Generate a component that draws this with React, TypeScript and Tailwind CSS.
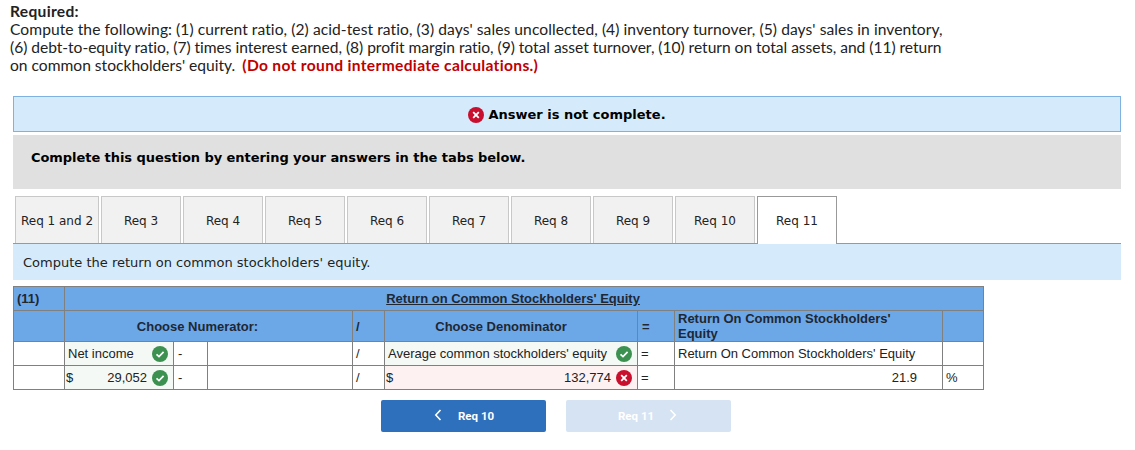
const tabs = ['Req 3', 'Req 4', 'Req 5', 'Req 6', 'Req 7', 'Req 8', 'Req 9', 'Req 10'];

function CheckIcon() {
  return (
    <svg viewBox="0 0 16 16" className="w-4 h-4 shrink-0">
      <circle cx="8" cy="8" r="8" fill="#3d9150" />
      <path d="M4.5 8.3 7 10.6 11.6 5.8" fill="none" stroke="#fff" strokeWidth="1.7" />
    </svg>
  );
}

function CrossIcon() {
  return (
    <svg viewBox="0 0 16 16" className="w-4 h-4 shrink-0">
      <circle cx="8" cy="8" r="8" fill="#c8102e" />
      <path d="M5.2 5.2 10.8 10.8M10.8 5.2 5.2 10.8" fill="none" stroke="#fff" strokeWidth="1.8" />
    </svg>
  );
}

const cell = 'border border-[#808080] p-0 align-middle';
const head = 'border border-[#808080] bg-[#6ca8e7] font-bold text-[#1f2733] align-middle p-0';
const tabClass = 'h-[47px] bg-[#f1f1f1] border border-b-0 border-[#c8c8c8] flex items-center justify-center pt-[2px] text-[12px] text-[#222] whitespace-nowrap';

export default function App() {
  return (
    <div className="w-[1135px] h-[450px] bg-white overflow-hidden relative font-['Liberation_Sans',sans-serif]">
      {/* Question text */}
      <div className="pl-[10px] pt-[2px] h-[96px] text-[15.6px] leading-[18px] text-[#222] font-['Lato',sans-serif] w-[960px] whitespace-nowrap [font-variant-ligatures:none]">
        <div className="font-bold tracking-[0.3px]">Required:</div>
        <div className="tracking-[0.07px]">Compute the following: (1) current ratio, (2) acid-test ratio, (3) days' sales uncollected, (4) inventory turnover, (5) days' sales in inventory,</div>
        <div className="tracking-[-0.03px]">(6) debt-to-equity ratio, (7) times interest earned, (8) profit margin ratio, (9) total asset turnover, (10) return on total assets, and (11) return</div>
        <div>
          on common stockholders' equity.{' '}
          <span className="ml-[3px] font-bold text-[#c00000] tracking-[0.32px]">(Do not round intermediate calculations.)</span>
        </div>
      </div>

      <div className="ml-[13px] w-[1108px] font-['DejaVu_Sans',sans-serif]">
        {/* Status banner */}
        <div className="h-[36px] bg-[#d5ebfb] border border-[#7fb2e0] flex items-center justify-center gap-[4px] pt-[1px] text-[13px] font-bold text-black">
          <CrossIcon />
          <span>Answer is not complete.</span>
        </div>
        <div className="mt-[3px] h-[54px] bg-[#e0e0e0] pl-[18px] pt-[14px] text-[13px] leading-[18px] font-bold text-black tracking-[-0.06px]">
          Complete this question by entering your answers in the tabs below.
        </div>

        {/* Tabs */}
        <div className="mt-[7px] h-[48px] pl-[2px] flex gap-[2px] border-b border-[#999]">
          <div className={`w-[84px] ${tabClass}`}>Req 1 and 2</div>
          {tabs.map((t) => (
            <div key={t} className={`w-[80px] ${tabClass}`}>
              {t}
            </div>
          ))}
          <div className="w-[80px] h-[48px] bg-white border border-b-0 border-[#999] flex items-center justify-center text-[12px] text-[#222] relative z-10">
            Req 11
          </div>
        </div>
        <div className="h-[36px] bg-[#d5ebfb] pl-[10px] pt-[2px] flex items-center text-[13px] text-[#222]">
          Compute the return on common stockholders' equity.
        </div>
      </div>

      {/* Ratio table */}
      <table className="mt-[6px] ml-[13px] border-collapse table-fixed w-[970px] text-[13px] leading-[15px] text-[#222]">
        <colgroup>
          <col className="w-[51px]" />
          <col className="w-[109px]" />
          <col className="w-[34px]" />
          <col className="w-[145px]" />
          <col className="w-[32px]" />
          <col className="w-[253px]" />
          <col className="w-[37px]" />
          <col className="w-[268px]" />
          <col className="w-[41px]" />
        </colgroup>
        <tbody>
          <tr className="h-[24px]">
            <td className={`${head} pl-[3px]`}>(11)</td>
            <td colSpan={8} className={`${head} text-center underline pr-[22px]`}>Return on Common Stockholders' Equity</td>
          </tr>
          <tr className="h-[31px]">
            <td className={head}></td>
            <td colSpan={3} className={`${head} text-center pr-[22px]`}>Choose Numerator:</td>
            <td className={`${head} pl-[3px]`}>/</td>
            <td className={`${head} text-center pr-[20px]`}>Choose Denominator</td>
            <td className={`${head} pl-[4px]`}>=</td>
            <td className={`${head} pl-[3px] pr-[40px]`}>Return On Common Stockholders' Equity</td>
            <td className={head}></td>
          </tr>
          <tr className="h-[24px]">
            <td className={cell}></td>
            <td className={`${cell} bg-[#f4f9f5]`}>
              <div className="flex items-center justify-between pl-[3px] pr-[5px]">
                <span>Net income</span>
                <CheckIcon />
              </div>
            </td>
            <td className={`${cell} pl-[4px]`}>-</td>
            <td className={cell}></td>
            <td className={`${cell} pl-[3px]`}>/</td>
            <td className={`${cell} bg-[#f4f9f5]`}>
              <div className="flex items-center justify-between pl-[3px] pr-[5px]">
                <span className="whitespace-nowrap">Average common stockholders' equity</span>
                <CheckIcon />
              </div>
            </td>
            <td className={`${cell} pl-[3px]`}>=</td>
            <td className={`${cell} pl-[3px] whitespace-nowrap`}>Return On Common Stockholders' Equity</td>
            <td className={cell}></td>
          </tr>
          <tr className="h-[24px]">
            <td className={cell}></td>
            <td className={`${cell} bg-[#f4f9f5]`}>
              <div className="flex items-center pl-[1px] pr-[5px]">
                <span>$</span>
                <span className="ml-auto mr-[5px]">29,052</span>
                <CheckIcon />
              </div>
            </td>
            <td className={`${cell} pl-[4px]`}>-</td>
            <td className={cell}></td>
            <td className={`${cell} pl-[3px]`}>/</td>
            <td className={`${cell} bg-[#fdf1f2]`}>
              <div className="flex items-center pl-[1px] pr-[5px]">
                <span>$</span>
                <span className="ml-auto mr-[5px]">132,774</span>
                <CrossIcon />
              </div>
            </td>
            <td className={`${cell} pl-[3px]`}>=</td>
            <td className={`${cell} text-right pr-[25px]`}>21.9</td>
            <td className={`${cell} pl-[3px]`}>%</td>
          </tr>
        </tbody>
      </table>

      {/* Prev / next */}
      <div className="mt-[10px] ml-[381px] flex gap-[20px] font-['Roboto',sans-serif] text-[11.5px] font-bold text-white">
        <div className="w-[165px] h-[32px] bg-[#2f70bd] rounded-[2px] flex items-center pl-[53px] pt-[2px] gap-[16px]">
          <svg viewBox="0 0 8 12" className="w-[8px] h-[12px] -mt-[4px]">
            <path d="M6.5 1 1.8 6l4.7 5" fill="none" stroke="#fff" strokeWidth="1.6" />
          </svg>
          <span>Req 10</span>
        </div>
        <div className="w-[165px] h-[32px] bg-[#d6e3f3] rounded-[2px] flex items-center pl-[52px] pt-[2px] gap-[15px]">
          <span>Req 11</span>
          <svg viewBox="0 0 8 12" className="w-[8px] h-[12px] -mt-[4px]">
            <path d="M1.5 1 6.2 6l-4.7 5" fill="none" stroke="#fff" strokeWidth="1.6" />
          </svg>
        </div>
      </div>
    </div>
  );
}
